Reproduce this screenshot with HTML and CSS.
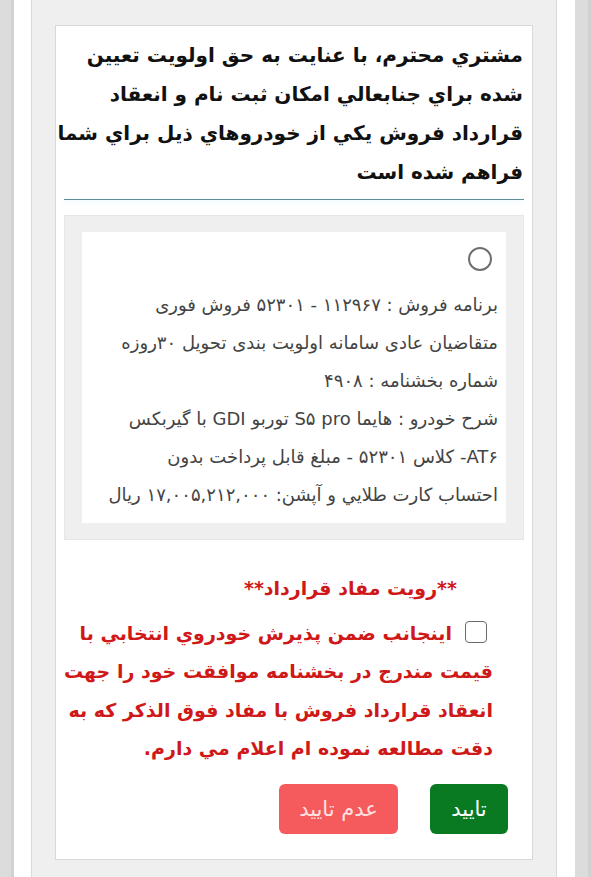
FILE: index.html
```html
<!DOCTYPE html>
<html lang="fa" dir="rtl">
<head>
<meta charset="utf-8">
<title>قرارداد</title>
<link rel="stylesheet" href="styles.css">
</head>
<body>
<div class="page">
  <div class="panel">
    <div class="card">
      <h1 class="title">مشتري محترم، با عنايت به حق اولويت تعيين<br>شده براي جنابعالي امكان ثبت نام و انعقاد<br>قرارداد فروش يكي از خودروهاي ذيل براي شما<br>فراهم شده است</h1>
      <div class="divider"></div>
      <div class="options">
        <label class="option">
          <span class="radio"></span>
          <span class="option-text">برنامه فروش : ۱۱۲۹۶۷ - ۵۲۳۰۱ فروش فوری<br>متقاضیان عادی سامانه اولویت بندی تحویل ۳۰روزه<br>شماره بخشنامه : ۴۹۰۸<br>شرح خودرو : هایما S۵ pro توربو GDI با گیربکس<br>AT۶- کلاس ۵۲۳۰۱ - مبلغ قابل پرداخت بدون<br>احتساب کارت طلايي و آپشن: ۱۷,۰۰۵,۲۱۲,۰۰۰ ریال</span>
        </label>
      </div>
      <div class="notice-title">**رويت مفاد قرارداد**</div>
      <p class="agree"><span class="checkbox"></span>اینجانب ضمن پذيرش خودروي انتخابي با<br>قيمت مندرج در بخشنامه موافقت خود را جهت<br>انعقاد قرارداد فروش با مفاد فوق الذكر كه به<br>دقت مطالعه نموده ام اعلام مي دارم.</p>
      <div class="actions">
        <button class="btn btn-ok">تایید</button>
        <button class="btn btn-cancel">عدم تایید</button>
      </div>
    </div>
  </div>
</div>
</body>
</html>
```

FILE: styles.css
```css
html, body {
  margin: 0;
  padding: 0;
}
body {
  background: #dcdcdc;
  font-family: "DejaVu Sans", sans-serif;
  border-right: 3px solid #d2d2d2;
  overflow: hidden;
}
.page {
  margin: 0 13px 0 11px;
  border-left: 3px solid #d2d2d2;
  background: #ffffff;
  padding: 0 18px 0 17px;
  min-height: 877px;
  box-sizing: border-box;
}
.panel {
  background: #efefef;
  border: 1px solid #dadada;
  border-top: none;
  border-bottom: none;
  padding: 25px 23px 40px;
  min-height: 920px;
  box-sizing: border-box;
}
.card {
  background: #ffffff;
  border: 1px solid #d8d8d8;
  padding: 10px 8px 25px;
}
.title {
  margin: 0;
  font-size: 20px;
  font-weight: bold;
  line-height: 39px;
  color: #111111;
  padding-right: 1px;
  white-space: nowrap;
}
.divider {
  margin-top: 7px;
  height: 1px;
  background: #5e8f99;
  box-shadow: 0 2px 4px rgba(120, 210, 230, 0.35);
}
.options {
  margin-top: 15px;
  background: #efefef;
  border: 1px solid #e6e6e6;
  padding: 16px 17px;
}
.option {
  display: flex;
  flex-direction: column;
  background: #ffffff;
  padding: 15px 8px 9px;
}
.radio {
  align-self: flex-start;
  width: 20px;
  height: 20px;
  border: 2px solid #6f6f6f;
  border-radius: 50%;
  margin-right: 6px;
}
.option-text {
  margin-top: 15px;
  font-size: 18px;
  line-height: 38px;
  color: #444444;
  white-space: nowrap;
}
.notice-title {
  margin-top: 29px;
  padding-right: 67px;
  font-size: 19px;
  font-weight: bold;
  line-height: 38px;
  color: #cf1818;
}
.agree {
  margin: 7px 0 0;
  padding-right: 31px;
  font-size: 19px;
  font-weight: bold;
  line-height: 38.3px;
  color: #cf1818;
  white-space: nowrap;
}
.checkbox {
  display: inline-block;
  vertical-align: -3px;
  width: 20px;
  height: 20px;
  border: 1.5px solid #6a6a6a;
  border-radius: 4px;
  margin: 0 6px 0 13px;
  background: #fff;
}
.actions {
  display: flex;
  gap: 32px;
  margin-top: 17px;
  padding-right: 16px;
}
.btn {
  height: 50px;
  border: none;
  border-radius: 6px;
  font-family: "DejaVu Sans", sans-serif;
  font-size: 21px;
}
.btn-ok {
  width: 78px;
  background: #0a7a22;
  color: #ffffff;
}
.btn-cancel {
  width: 119px;
  background: #f55b5d;
  color: #ffe1e1;
}
```
